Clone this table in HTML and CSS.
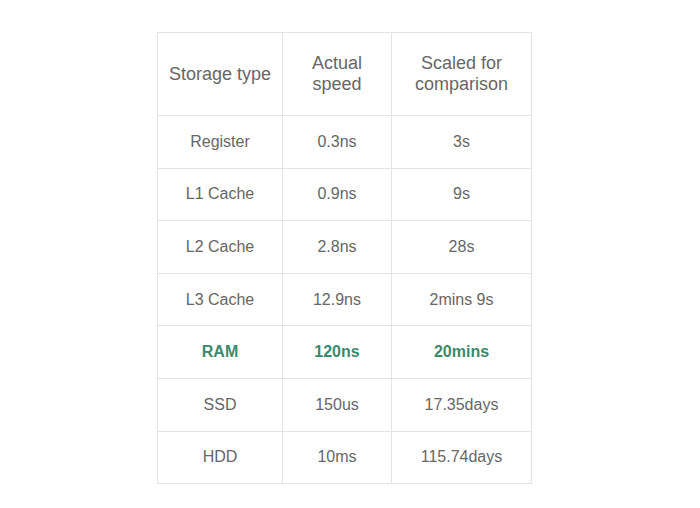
FILE: index.html
```html
<!DOCTYPE html>
<html>
<head>
<meta charset="utf-8">
<link rel="stylesheet" href="styles.css">
</head>
<body>
<div class="page">
<table class="speed-table">
<colgroup>
<col class="c1"><col class="c2"><col class="c3">
</colgroup>
<thead>
<tr><th>Storage type</th><th>Actual<br>speed</th><th>Scaled for<br>comparison</th></tr>
</thead>
<tbody>
<tr><td>Register</td><td>0.3ns</td><td>3s</td></tr>
<tr><td>L1 Cache</td><td>0.9ns</td><td>9s</td></tr>
<tr><td>L2 Cache</td><td>2.8ns</td><td>28s</td></tr>
<tr><td>L3 Cache</td><td>12.9ns</td><td>2mins 9s</td></tr>
<tr class="hl"><td>RAM</td><td>120ns</td><td>20mins</td></tr>
<tr><td>SSD</td><td>150us</td><td>17.35days</td></tr>
<tr><td>HDD</td><td>10ms</td><td>115.74days</td></tr>
</tbody>
</table>
</div>
</body>
</html>
```
FILE: styles.css
```css
html, body {
  margin: 0;
  padding: 0;
  background: #ffffff;
}
.page {
  padding: 32px 0 0 157px;
  font-family: "Liberation Sans", Arial, sans-serif;
  color: #666666;
}
.speed-table {
  border-collapse: collapse;
  table-layout: fixed;
  width: 374px;
}
.c1 { width: 125px; }
.c2 { width: 109px; }
.c3 { width: 140px; }
.speed-table th,
.speed-table td {
  border: 1px solid #e3e3e3;
  text-align: center;
  padding: 0 8px;
}
.speed-table th {
  font-weight: normal;
  font-size: 18px;
  line-height: 21px;
  height: 82px;
}
.speed-table td {
  font-size: 16px;
  line-height: 18px;
  height: 51.6px;
}
.speed-table tr.hl td {
  color: #3b8a6c;
  font-weight: bold;
}
```
